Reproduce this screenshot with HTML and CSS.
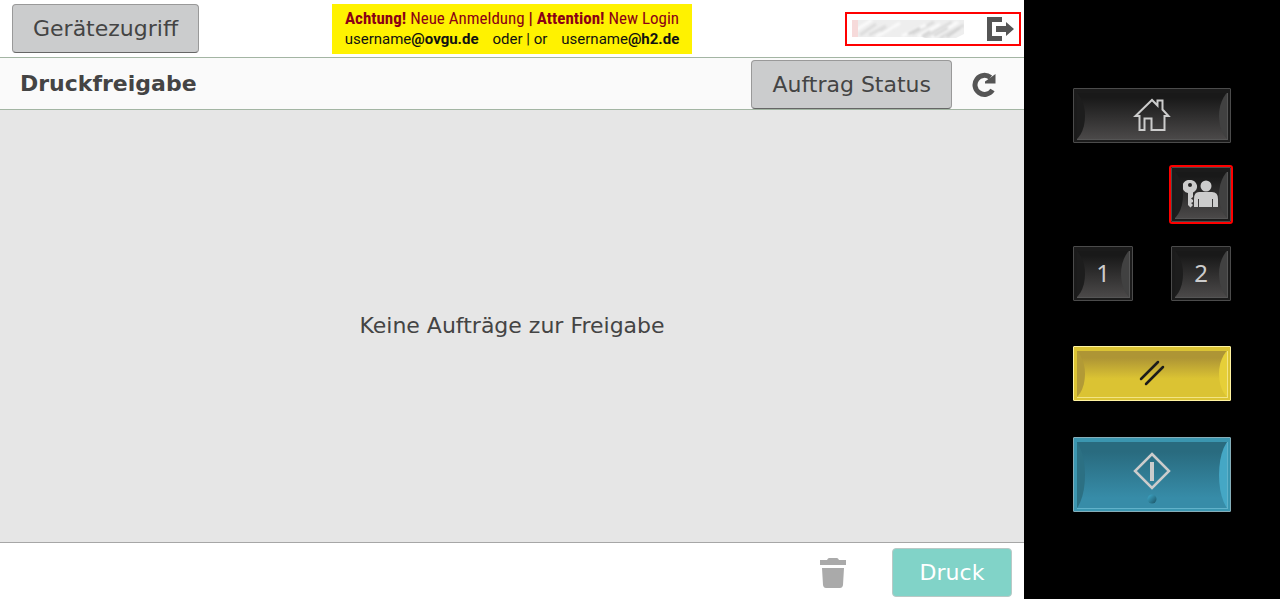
FILE: index.html
```html
<!DOCTYPE html>
<html lang="de">
<head>
<meta charset="utf-8">
<title>Druckfreigabe</title>
<link rel="stylesheet" href="styles.css">
</head>
<body>
<main class="screen">
  <header class="topbar">
    <button class="btn" type="button">Gerätezugriff</button>
    <div class="notice">
      <p class="notice-title"><b>Achtung!</b> Neue Anmeldung <b>|</b> <b>Attention!</b> New Login</p>
      <p class="notice-users"><span>username<b>@ovgu.de</b></span><span>oder | or</span><span>username<b>@h2.de</b></span></p>
    </div>
    <div class="account">
      <svg class="account-name" width="113" height="18" viewBox="0 0 113 18" aria-hidden="true">
        <defs>
          <filter id="soft"><feGaussianBlur stdDeviation="1"/></filter>
          <clipPath id="nameBox"><path d="M0 0H112V14L104 18H74L70 17H0Z"/></clipPath>
        </defs>
        <g clip-path="url(#nameBox)">
          <rect width="113" height="18" fill="#eeeeee"/>
          <g filter="url(#soft)" stroke-width="3" fill="none">
            <path stroke="#dcdcdc" d="M8 15 24 4M17 15 34 6M29 12 42 7M60 14 82 2M71 18 100 2M88 18 112 5"/>
            <path stroke="#fbfbfb" d="M4 10 20 0M24 17 48 3M50 16 74 5M66 17 88 4M80 18 106 2"/>
            <path stroke="#cecece" stroke-width="2" d="M56 14 68 8M70 16 78 11M82 16 96 8M95 17 108 8"/>
          </g>
          <rect width="6" height="17" fill="#f6dada"/>
        </g>
      </svg>
      <button class="icon-btn" type="button" aria-label="Abmelden">
        <svg width="28" height="24" viewBox="0 0 28 24"><path fill="#555" d="M0 0H15V5H5V19H15V24H0ZM9 9H19V5L27 12 19 19V15H9Z"/></svg>
      </button>
    </div>
  </header>
  <div class="titlebar">
    <h1>Druckfreigabe</h1>
    <button class="btn" type="button">Auftrag Status</button>
    <button class="icon-btn reload" type="button" aria-label="Aktualisieren">
      <svg width="24" height="25" viewBox="0 0 24 25"><path d="M20.500 18A9.500 9.500 0 1 1 18.500 5.500" fill="none" stroke="#555" stroke-width="5"/><path fill="#555" d="M23.500 2V11.500H13V9.500Z"/></svg>
    </button>
  </div>
  <section class="jobs"><p>Keine Aufträge zur Freigabe</p></section>
  <footer class="actions">
    <button class="icon-btn" type="button" aria-label="Löschen">
      <svg width="26" height="30" viewBox="0 0 26 30"><path fill="#aaa" d="M0 2H7Q8 0 9 0H17Q18 0 19 2H26V7H0ZM2 10H24L23 27Q22.500 30 20 30H6Q3.500 30 3 27Z"/></svg>
    </button>
    <button class="btn btn-print" type="button">Druck</button>
  </footer>
</main>
<aside class="panel">
  <div class="keys">
    <button class="key wide" type="button" aria-label="Home"><span class="face">
      <svg width="38" height="34" viewBox="0 0 38 34"><path d="M6.500 18H2.500L19 2 24.500 7.500V2.500H29.500V11.500L35.500 18H31.500V32H18.500V20.500H11.500V32H6.500Z" fill="none" stroke="#ccc" stroke-width="2"/></svg>
    </span></button>
    <button class="key login" type="button" aria-label="Anmelden"><span class="face">
      <svg width="36" height="28" viewBox="0 0 36 28" fill="#ccc"><path fill-rule="evenodd" d="M7 0A6.500 6.500 0 0 1 10 12.500V17L8 18.500 10 20V22L8 23 10 25 7.500 27.500 5 25V13A6.500 6.500 0 0 1 7 0ZM7 3A2 2 0 1 0 7 7 2 2 0 0 0 7 3Z"/><circle cx="23" cy="6" r="5.500"/><path d="M16 12H29Q35 12 35 19V27H30V19H29V27H16V19H15V27H11V19Q11 12 16 12Z"/></svg>
    </span></button>
    <button class="key first" type="button"><span class="face">1</span></button>
    <button class="key" type="button"><span class="face">2</span></button>
    <button class="key wide reset" type="button" aria-label="Zurücksetzen"><span class="face">
      <svg width="26" height="26" viewBox="0 0 26 26"><path d="M2 19 19 2M7 24 24 7" stroke="#1c1c1c" stroke-width="2.500" stroke-linecap="round"/></svg>
    </span></button>
    <button class="key wide start" type="button" aria-label="Start"><span class="face">
      <svg width="38" height="58" viewBox="0 -6 38 58"><defs><linearGradient id="lamp" x1="0" y1="0" x2="1" y2="1"><stop offset=".2" stop-color="#399ab8"/><stop offset="1" stop-color="#1b5263"/></linearGradient></defs><path d="M19 2 36 19 19 36 2 19Z" fill="none" stroke="#ccc" stroke-width="2.500"/><path d="M19 10V29" stroke="#ccc" stroke-width="4"/><circle cx="19" cy="47" r="4.500" fill="url(#lamp)"/></svg>
    </span></button>
  </div>
</aside>
</body>
</html>
```
FILE: styles.css
```css
* { box-sizing: border-box; }
body {
  margin: 0;
  min-height: 100vh;
  display: grid;
  grid-template-columns: 4fr 1fr;
  background: #000;
  color: #444;
  font: 22px/26px "DejaVu Sans", sans-serif;
}
p, h1 { margin: 0; }
button { font: inherit; color: inherit; cursor: pointer; }

.screen {
  display: flex;
  flex-direction: column;
  background: #fff;
}
.btn {
  padding: 11px 20px 10px;
  border: 1px solid #999;
  border-bottom-color: #666;
  border-radius: 4px;
  background: #cbcccd;
}
.icon-btn {
  display: flex;
  padding: 0;
  border: 0;
  background: none;
}

.topbar {
  display: grid;
  grid-template-columns: 1fr auto 1fr;
  align-items: start;
  padding: 4px 3px 3px;
  border-bottom: 1px solid #a3b5a3;
  column-gap: 8px;
}
.topbar .btn {
  justify-self: start;
  margin-left: 9px;
}
.notice {
  width: 360px;
  padding: 3px 0 6px;
  background: #fff200;
  text-align: center;
  white-space: nowrap;
}
.notice-title {
  color: #8b0015;
  font: 17px/23px "Roboto Condensed", "Liberation Sans Narrow", "DejaVu Sans Condensed", sans-serif;
}
.notice-users {
  display: flex;
  justify-content: center;
  gap: 14px;
  color: #111;
  font: 15px/18px Roboto, sans-serif;
}
.account {
  justify-self: end;
  display: flex;
  align-items: center;
  justify-content: space-between;
  width: 176px;
  height: 34px;
  margin-top: 8px;
  padding: 0 4px 0 5px;
  border: 2px solid #f00;
}

.titlebar {
  display: flex;
  align-items: center;
  padding: 2px 28px 0 20px;
  border-bottom: 1px solid #a3b5a3;
  background: #fafafa;
}
h1 {
  flex: 1;
  padding-bottom: 2px;
  font-size: 22px;
  line-height: 26px;
}
.reload { margin-left: 20px; }

.jobs {
  flex: 1;
  display: grid;
  place-items: center;
  background: #e6e6e6;
}
.actions {
  display: flex;
  align-items: center;
  justify-content: flex-end;
  gap: 46px;
  padding: 5px 12px 2px;
  border-top: 1px solid #a6a6a6;
}
.btn-print {
  min-width: 120px;
  border-color: #b9c9c6;
  background: #81d3c8;
  color: #fff;
}

.panel { padding-top: 88px; }
.keys {
  display: grid;
  grid-template-columns: 60px 60px;
  justify-content: center;
  column-gap: 38px;
  row-gap: 24px;
}
.key {
  height: 55px;
  padding: 4px 2px 2px 3px;
  border: 1px solid #4b4b4b;
  border-radius: 1px;
  background: #1b1b1b;
  color: #ccc;
  font: 24px/26px "Noto Sans", sans-serif;
}
.wide { grid-column: 1 / 3; }
.login {
  grid-column: 2;
  outline: 2px solid #f00;
}
.first { grid-column: 1; }
.face {
  position: relative;
  display: grid;
  place-items: center;
  height: 100%;
  padding-bottom: 2px;
  border: solid #555;
  border-width: 0 1px 1px 0;
  background: linear-gradient(#191919 10%, #4b4949);
}
.face::before,
.face::after {
  content: "";
  position: absolute;
  top: 0;
  bottom: 0;
  width: 8px;
}
.face::before {
  left: 0;
  clip-path: ellipse(16px 58% at -8px 50%);
  background: #1d1d1d;
}
.face::after {
  right: 0;
  clip-path: ellipse(16px 58% at 16px 50%);
  background: #414141;
}
.reset {
  margin-top: 21px;
  border-color: #fff3a0;
  background: #dbc333;
}
.reset .face {
  border-color: #f3e483;
  background: linear-gradient(#ae9535 15%, #dbc333 60%);
}
.reset .face::before { background: #b29a36; }
.reset .face::after { background: #e6cf38; }
.start {
  height: 75px;
  margin-top: 12px;
  border-color: #85aeb9;
  background: #3b96b0;
}
.start .face {
  padding: 0;
  border-color: #61b2ca;
  background: linear-gradient(#296b7f 15%, #378ca8 85%);
}
.start .face::before { background: #2c7083; }
.start .face::after { background: #45a7c5; }
```
